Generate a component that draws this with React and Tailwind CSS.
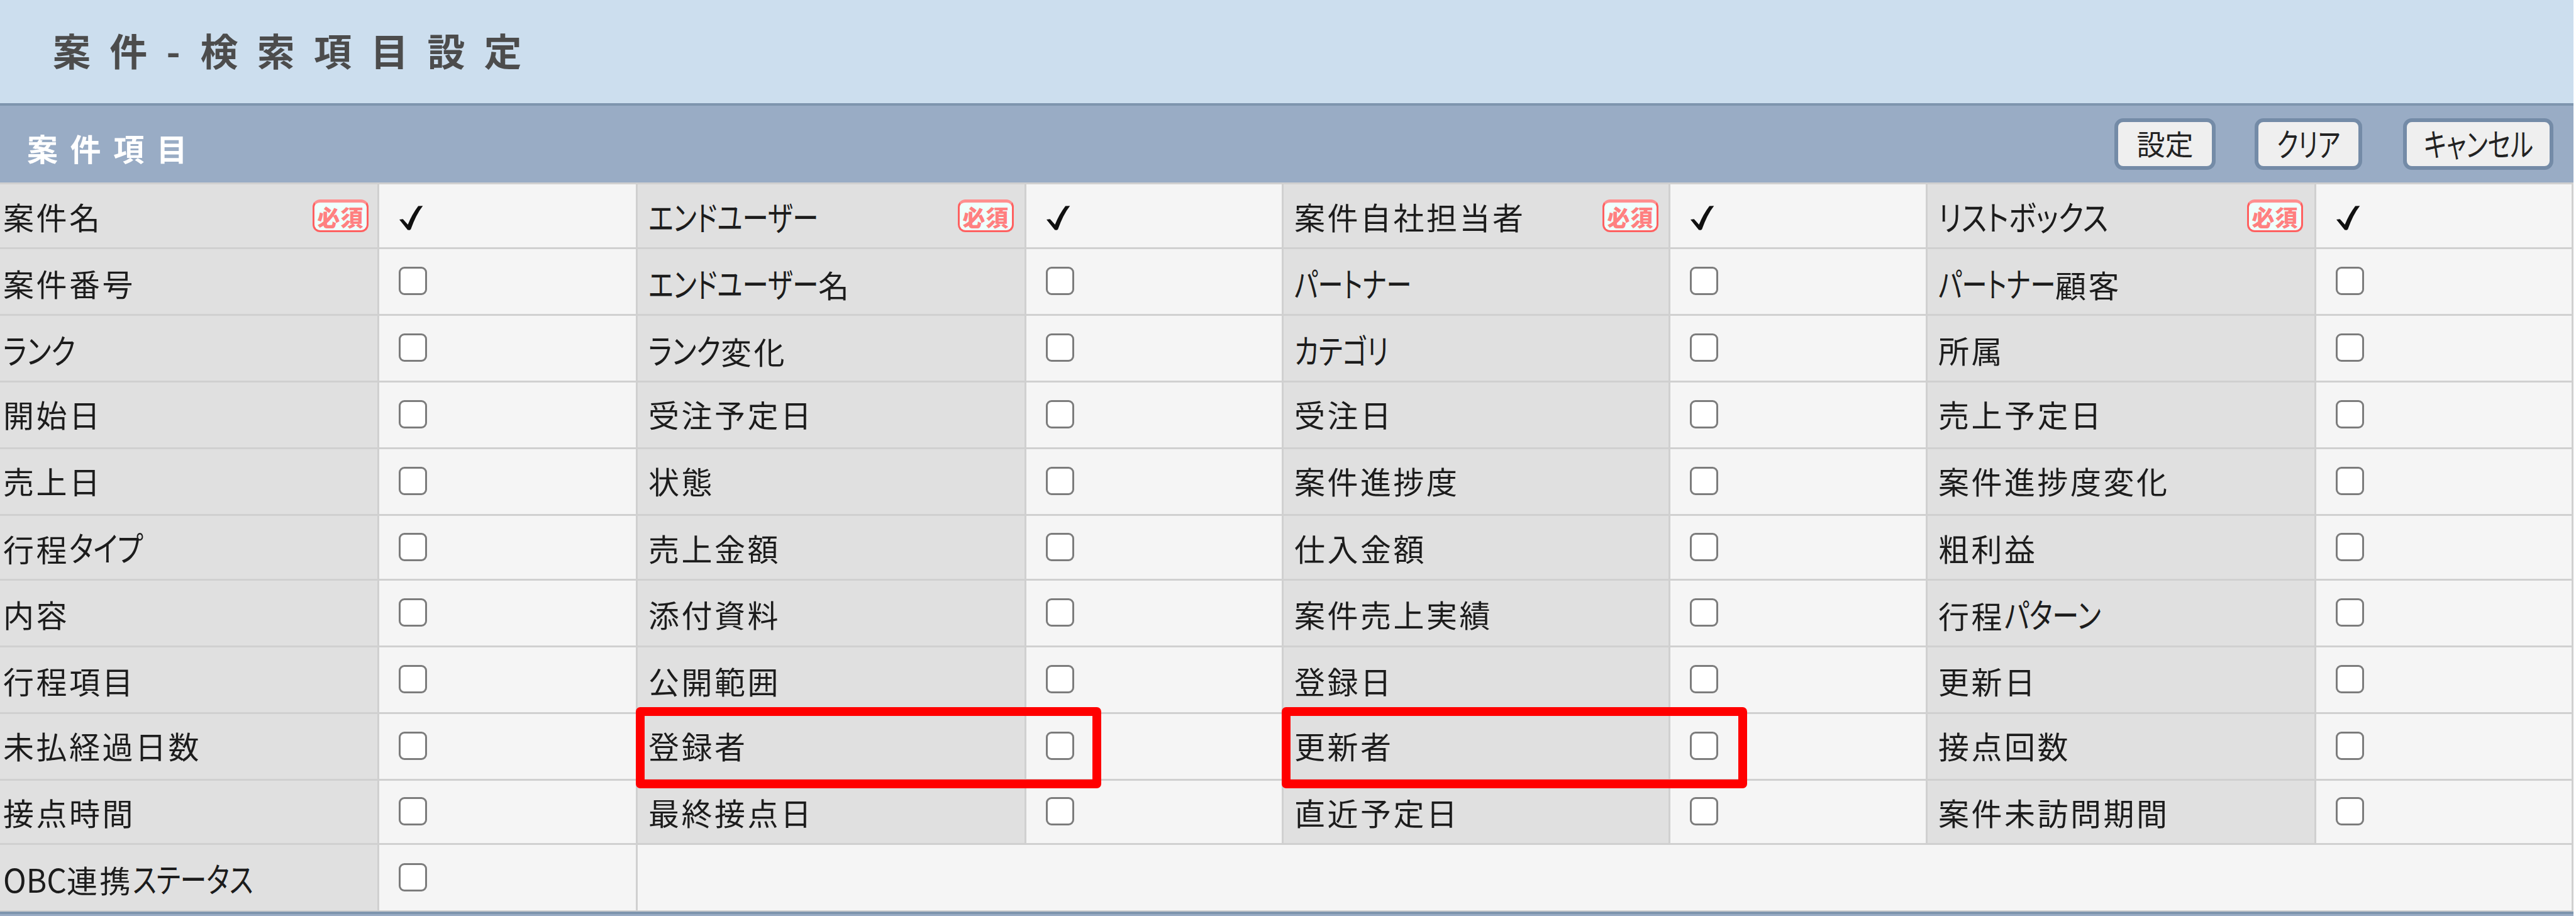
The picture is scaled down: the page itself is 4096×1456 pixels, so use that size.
import React, { useLayoutEffect, useRef, useState } from 'react';

const rows = [
  { height: 'h-[103px]', shift: 'mt-[1px]', items: ['案件名', 'エンドユーザー', '案件自社担当者', 'リストボックス'], required: true },
  { height: 'h-[106px]', shift: 'mt-[4px]', items: ['案件番号', 'エンドユーザー名', 'パートナー', 'パートナー顧客'] },
  { height: 'h-[106px]', shift: 'mt-[4px]', items: ['ランク', 'ランク変化', 'カテゴリ', '所属'] },
  { height: 'h-[106px]', shift: '-mt-[4px]', items: ['開始日', '受注予定日', '受注日', '売上予定日'] },
  { height: 'h-[106px]', shift: '-mt-[4px]', items: ['売上日', '状態', '案件進捗度', '案件進捗度変化'] },
  { height: 'h-[103px]', shift: 'mt-0', items: ['行程タイプ', '売上金額', '仕入金額', '粗利益'] },
  { height: 'h-[106px]', shift: 'mt-[2px]', items: ['内容', '添付資料', '案件売上実績', '行程パターン'] },
  { height: 'h-[106px]', shift: 'mt-[2px]', items: ['行程項目', '公開範囲', '登録日', '更新日'] },
  { height: 'h-[106px]', shift: '-mt-[4px]', items: ['未払経過日数', '登録者', '更新者', '接点回数'] },
  { height: 'h-[102px]', shift: 'mt-0', items: ['接点時間', '最終接点日', '直近予定日', '案件未訪問期間'] },
  { height: 'h-[107px]', shift: 'mt-[2px]', items: ['OBC連携ステータス'] },
];

const columns = [
  { label: 'w-[603px] pl-[5px] pr-[14px]', check: 'w-[411px]' },
  { label: 'w-[618px] pl-[17px] pr-[17px]', check: 'w-[409px]' },
  { label: 'w-[615px] pl-[17px] pr-[16px]', check: 'w-[409px]' },
  { label: 'w-[618px] pl-[17px] pr-[18px]', check: 'w-[409px]' },
];

// drawn widths of the condensed runs
const narrowWidths = {
  エンドユーザー: 270,
  リストボックス: 270,
  パートナー: 186,
  ランク: 115,
  カテゴリ: 150,
  タイプ: 117,
  パターン: 154,
  ステータス: 192,
  OBC: 101,
  クリア: 101,
  キャンセル: 174,
};

const Narrow = ({ text }) => {
  const ref = useRef(null);
  const [scale, setScale] = useState(1);
  const width = narrowWidths[text];

  useLayoutEffect(() => {
    setScale(width / ref.current.offsetWidth);
  }, [width]);

  return (
    <span className="inline-block whitespace-nowrap" style={{ width }}>
      <span
        ref={ref}
        className="inline-block origin-left tracking-normal [font-feature-settings:'palt']"
        style={{ transform: `scaleX(${scale})` }}
      >
        {text}
      </span>
    </span>
  );
};

const Label = ({ text }) => (
  <span className="whitespace-nowrap text-[49px] leading-none tracking-[3.5px]">
    {text.split(/([ァ-ヶー]+|[A-Z]+)/).filter(Boolean).map((part) =>
      narrowWidths[part] ? (
        <span key={part} className={part === 'OBC' ? 'text-[52px] leading-none' : 'text-[54px] leading-none'}>
          <Narrow text={part} />
        </span>
      ) : (
        part
      )
    )}
  </span>
);

const RequiredBadge = () => (
  <span className="flex h-[52px] w-[89px] items-center justify-center rounded-[12px] border-[3px] border-t-[5px] border-[#ff6060] border-t-[#ff9090] bg-[#effffc] text-[36px] font-black leading-none tracking-[1px] text-[#ff8080]">
    必須
  </span>
);

const CheckMark = () => (
  <svg viewBox="0 0 115 117" className="ml-[1px] mt-[7px] h-[39px] w-[38px]">
    <path d="M0 66 L17 64 L41 90 Q60 42 91 1 L113 0 Q80 42 55 113 L50 117 L40 116 Z" fill="#101010" />
  </svg>
);

const Checkbox = () => (
  <span className="mb-[2px] h-[45px] w-[45px] rounded-[9px] border-[3px] border-[#7c7c7c] bg-white" />
);

const Button = ({ className, children }) => (
  <button
    className={`flex h-[82px] items-center justify-center rounded-[14px] border-[6px] border-[#748ba7] bg-[#efefef] pb-[4px] leading-none text-[#222] ${className}`}
  >
    {children}
  </button>
);

const Highlight = ({ className }) => (
  <div className={`absolute h-[129px] w-[740px] ${className}`}>
    <div className="h-full w-full rounded-[7px] border-[14px] border-[#ff0000]" />
  </div>
);

const App = () => {
  return (
    <div className="h-[1456px] w-[4096px] overflow-hidden bg-white font-['Noto_Sans_CJK_JP','Noto_Sans',sans-serif]">
      <div className="relative flex h-[1456px] w-[4092px] flex-col text-[#1c1c1c]">
        <header className="flex h-[168px] items-center border-b-4 border-[#7e95ae] bg-[#ccdeee] pl-[84px]">
          <h1 className="-mt-[6px] whitespace-nowrap text-[60px] font-bold leading-none tracking-[30.2px] text-[#4c4c4c]">
            案件<span className="tracking-[32px]">-</span>検索項目設定
          </h1>
        </header>

        <div className="flex h-[122px] items-center justify-between bg-[#99acc5] pl-[43px] pr-[32px]">
          <h2 className="mt-[11px] whitespace-nowrap text-[49px] font-bold leading-none tracking-[19.6px] text-white">案件項目</h2>
          <div className="flex items-center">
            <Button className="w-[161px] text-[45px]">設定</Button>
            <Button className="ml-[62px] w-[171px] text-[51px]">
              <Narrow text="クリア" />
            </Button>
            <Button className="ml-[65px] w-[239px] text-[51px]">
              <Narrow text="キャンセル" />
            </Button>
          </div>
        </div>

        {rows.map((row) => (
          <div key={row.items[0]} className={`flex shrink-0 border-t-[3px] border-[#d0d0d0] bg-[#f5f5f5] ${row.height}`}>
            {row.items.map((item, i) => (
              <React.Fragment key={item}>
                <div className={`flex items-center justify-between border-r-[3px] border-[#d0d0d0] bg-[#e0e0e0] ${columns[i].label}`}>
                  <div className={`flex ${row.shift}`}>
                    <Label text={item} />
                  </div>
                  {row.required && <RequiredBadge />}
                </div>
                <div className={`flex items-center border-r-[3px] border-[#d0d0d0] pl-[31px] ${columns[i].check}`}>
                  {row.required ? <CheckMark /> : <Checkbox />}
                </div>
              </React.Fragment>
            ))}
            {row.items.length < 4 && <div className="grow border-r-[3px] border-[#d0d0d0]" />}
          </div>
        ))}

        <div className="h-[9px] shrink-0 border-t-2 border-[#cfcfcf] bg-[#99acc5]">
          <div className="h-1 bg-[#7e95ae]" />
        </div>

        <Highlight className="left-[1011px] top-[1124px]" />
        <Highlight className="left-[2038px] top-[1124px]" />
      </div>
    </div>
  );
};

export default App;
